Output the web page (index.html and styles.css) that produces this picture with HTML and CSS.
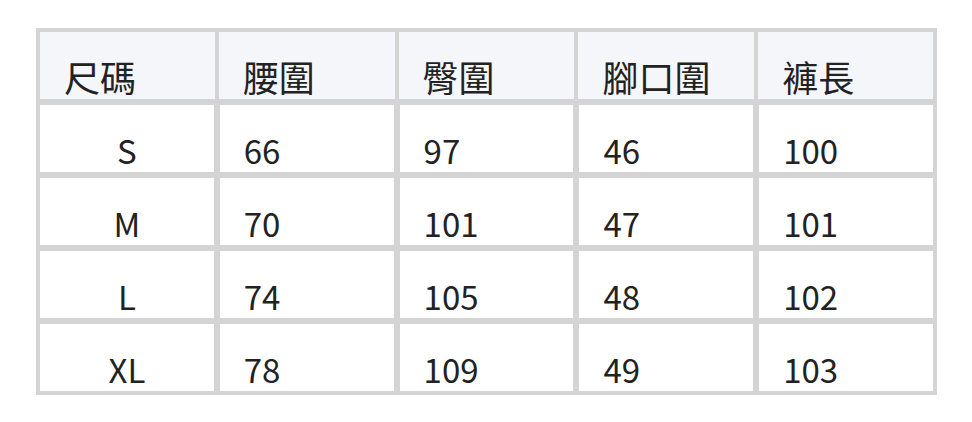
FILE: index.html
```html
<!DOCTYPE html>
<html lang="zh-Hant">
<head>
<meta charset="utf-8">
<title>尺碼表</title>
<link rel="stylesheet" href="styles.css">
</head>
<body>
<table class="size-table">
  <thead>
    <tr>
      <th>尺碼</th>
      <th>腰圍</th>
      <th>臀圍</th>
      <th>腳口圍</th>
      <th>褲長</th>
    </tr>
  </thead>
  <tbody>
    <tr><td class="size">S</td><td>66</td><td>97</td><td>46</td><td>100</td></tr>
    <tr><td class="size">M</td><td>70</td><td>101</td><td>47</td><td>101</td></tr>
    <tr><td class="size">L</td><td>74</td><td>105</td><td>48</td><td>102</td></tr>
    <tr><td class="size">XL</td><td>78</td><td>109</td><td>49</td><td>103</td></tr>
  </tbody>
</table>
</body>
</html>
```
FILE: styles.css
```css
html, body {
  margin: 0;
  padding: 0;
  background: #ffffff;
}

body {
  padding: 28px 0 0 36px;
  font-family: "Noto Sans CJK TC", "Noto Sans", sans-serif;
  color: #222222;
}

.size-table {
  width: 901px;
  table-layout: fixed;
  border-collapse: separate;
  border-spacing: 0;
  border: 1px solid #d4d4d4;
}

.size-table tr {
  height: 73px;
}

.size-table th,
.size-table td {
  border: 3px solid #d4d4d4;
  vertical-align: bottom;
  text-align: left;
  padding: 0 10px 0 24px;
  white-space: nowrap;
}

.size-table th {
  background: #f5f6fa;
  font-weight: 400;
  font-size: 36px;
  line-height: 36px;
  padding-bottom: 5px;
  border-left-width: 2px;
  border-right-width: 2px;
}

.size-table th:first-child {
  border-left-width: 3px;
}

.size-table th:last-child {
  border-right-width: 3px;
}

.size-table td {
  font-size: 33px;
  line-height: 33px;
  padding-bottom: 5px;
}

.size-table td.size {
  text-align: center;
  padding-left: 10px;
}
```
